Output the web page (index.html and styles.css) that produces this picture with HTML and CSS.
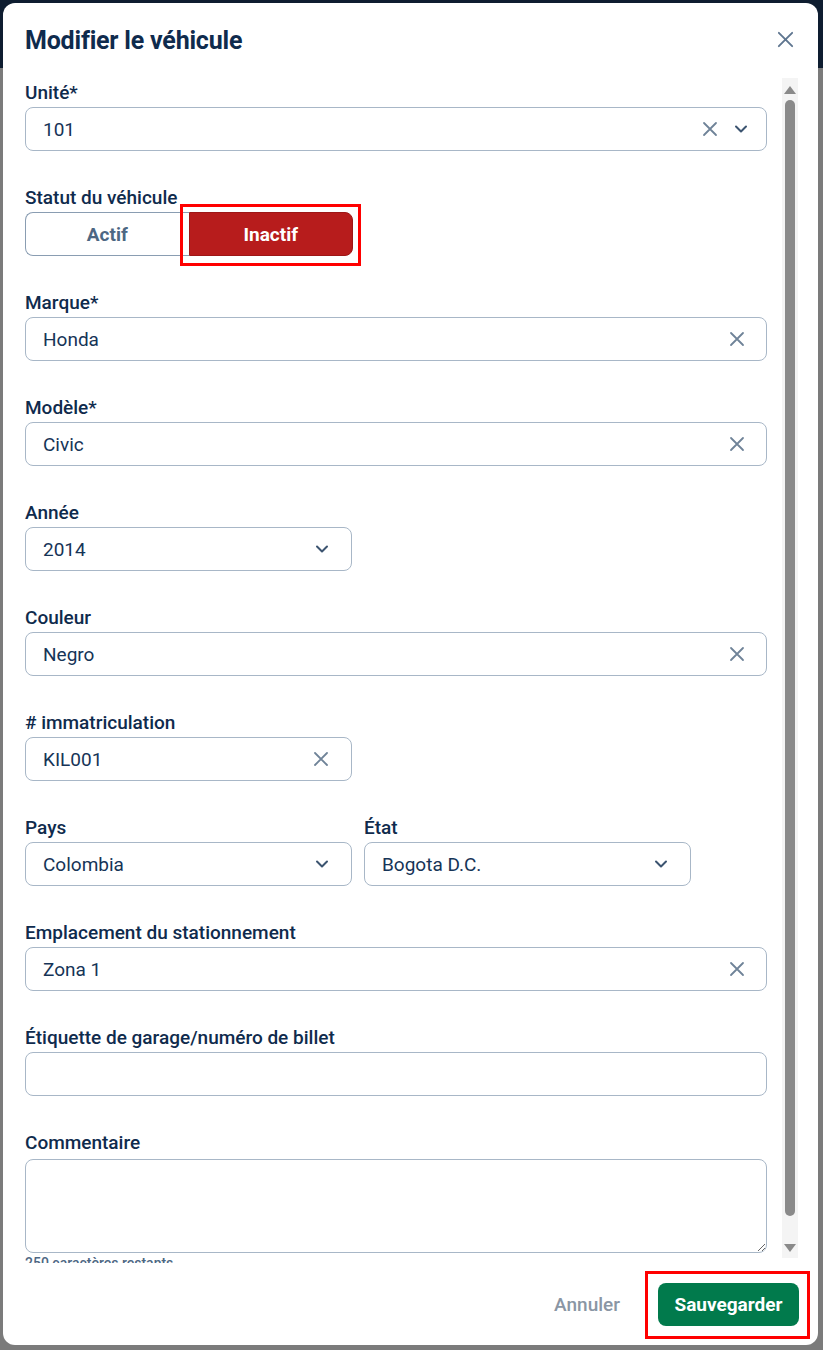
FILE: index.html
```html
<!DOCTYPE html>
<html lang="fr">
<head>
<meta charset="utf-8">
<title>Modifier le véhicule</title>
<link rel="stylesheet" href="styles.css">
</head>
<body>
<div class="backdrop">
  <div class="modal">
    <div class="modal-header">
      <h1 class="title">Modifier le véhicule</h1>
      <svg class="close" viewBox="0 0 20 20" width="20" height="20"><path d="M3 3 L17 17 M17 3 L3 17" stroke="#5f7690" stroke-width="2" fill="none" stroke-linecap="round"/></svg>
    </div>
    <div class="modal-body">
      <div class="form">
        <div class="field">
          <div class="label">Unité*</div>
          <div class="input">
            <span class="value">101</span>
            <span class="icons">
              <svg class="ic-x" viewBox="0 0 16 16"><path d="M2 2 L14 14 M14 2 L2 14"/></svg>
              <svg class="ic-chev" viewBox="0 0 14 10"><path d="M2 2.5 L7 7.5 L12 2.5"/></svg>
            </span>
          </div>
        </div>
        <div class="field">
          <div class="label">Statut du véhicule</div>
          <div class="toggle">
            <div class="seg">Actif</div>
            <div class="seg active">Inactif</div>
            <div class="annot annot-toggle"></div>
          </div>
        </div>
        <div class="field">
          <div class="label">Marque*</div>
          <div class="input clear">
            <span class="value">Honda</span>
            <span class="icons"><svg class="ic-x" viewBox="0 0 16 16"><path d="M2 2 L14 14 M14 2 L2 14"/></svg></span>
          </div>
        </div>
        <div class="field">
          <div class="label">Modèle*</div>
          <div class="input clear">
            <span class="value">Civic</span>
            <span class="icons"><svg class="ic-x" viewBox="0 0 16 16"><path d="M2 2 L14 14 M14 2 L2 14"/></svg></span>
          </div>
        </div>
        <div class="field half">
          <div class="label">Année</div>
          <div class="input">
            <span class="value">2014</span>
            <span class="icons"><svg class="ic-chev" viewBox="0 0 14 10"><path d="M2 2.5 L7 7.5 L12 2.5"/></svg></span>
          </div>
        </div>
        <div class="field">
          <div class="label">Couleur</div>
          <div class="input clear">
            <span class="value">Negro</span>
            <span class="icons"><svg class="ic-x" viewBox="0 0 16 16"><path d="M2 2 L14 14 M14 2 L2 14"/></svg></span>
          </div>
        </div>
        <div class="field half">
          <div class="label"># immatriculation</div>
          <div class="input">
            <span class="value">KIL001</span>
            <span class="icons"><svg class="ic-x" viewBox="0 0 16 16"><path d="M2 2 L14 14 M14 2 L2 14"/></svg></span>
          </div>
        </div>
        <div class="field-row">
          <div class="field half">
            <div class="label">Pays</div>
            <div class="input">
              <span class="value">Colombia</span>
              <span class="icons"><svg class="ic-chev" viewBox="0 0 14 10"><path d="M2 2.5 L7 7.5 L12 2.5"/></svg></span>
            </div>
          </div>
          <div class="field half">
            <div class="label">État</div>
            <div class="input">
              <span class="value">Bogota D.C.</span>
              <span class="icons"><svg class="ic-chev" viewBox="0 0 14 10"><path d="M2 2.5 L7 7.5 L12 2.5"/></svg></span>
            </div>
          </div>
        </div>
        <div class="field">
          <div class="label">Emplacement du stationnement</div>
          <div class="input clear">
            <span class="value">Zona 1</span>
            <span class="icons"><svg class="ic-x" viewBox="0 0 16 16"><path d="M2 2 L14 14 M14 2 L2 14"/></svg></span>
          </div>
        </div>
        <div class="field">
          <div class="label">Étiquette de garage/numéro de billet</div>
          <div class="input"></div>
        </div>
        <div class="field last">
          <div class="label">Commentaire</div>
          <textarea class="textarea"></textarea>
          <div class="helper">250 caractères restants</div>
        </div>
      </div>
      <div class="scrollbar">
        <div class="sb-arrow up"></div>
        <div class="sb-track"><div class="sb-thumb"></div></div>
        <div class="sb-arrow down"></div>
      </div>
    </div>
    <div class="modal-footer">
      <button class="btn-cancel">Annuler</button>
      <div class="save-wrap">
        <button class="btn-save">Sauvegarder</button>
        <div class="annot annot-save"></div>
      </div>
    </div>
  </div>
</div>
</body>
</html>
```

FILE: styles.css
```css
* { box-sizing: border-box; }
html, body { margin: 0; padding: 0; }
body {
  width: 823px;
  height: 1350px;
  overflow: hidden;
  font-family: Roboto, "Noto Sans", "Liberation Sans", sans-serif;
  background: linear-gradient(to bottom, #0e1d30 0, #0e1d30 68px, #7b7b7b 68px, #7b7b7b 100%);
}
.backdrop {
  padding: 3px 5px 5px 3px;
  height: 1350px;
}
.modal {
  width: 815px;
  height: 1342px;
  background: #fff;
  border-radius: 12px;
  display: flex;
  flex-direction: column;
  overflow: hidden;
}
.modal-header {
  height: 65px;
  flex: none;
  display: flex;
  align-items: center;
  justify-content: space-between;
  padding: 0 22px 0 22px;
}
.title {
  margin: 0;
  font-size: 25px;
  font-weight: 700;
  color: #0f2b4d;
  letter-spacing: -0.2px;
  padding-top: 9px;
}
.close { width: 19px; height: 19px; margin-top: 8px; margin-right: 1px; }

.modal-body {
  height: 1195px;
  flex: none;
  display: flex;
  overflow: hidden;
}
.form {
  width: 779px;
  padding: 14px 15px 0 22px;
  overflow: hidden;
}
.field { margin-bottom: 36px; }
.field.half { width: 327px; }
.field-row { display: flex; gap: 12px; }
.label {
  font-size: 19px;
  font-weight: 500;
  color: #0f2b4d;
  line-height: 22px;
  height: 22px;
  margin-bottom: 3px;
}
.input {
  height: 44px;
  border: 1px solid #a8b7c7;
  border-radius: 8px;
  display: flex;
  align-items: center;
  justify-content: space-between;
  padding: 0 18px 0 17px;
  background: #fff;
}
.input.clear { padding-right: 21px; }
.value {
  font-size: 19px;
  color: #163457;
}
.icons { display: flex; align-items: center; gap: 16px; }
.ic-x { width: 16px; height: 16px; }
.ic-x path { stroke: #6f8398; stroke-width: 1.8; fill: none; stroke-linecap: round; }
.ic-chev { width: 14px; height: 10px; }
.ic-chev path { stroke: #3c5470; stroke-width: 2; fill: none; stroke-linecap: round; stroke-linejoin: round; }
.half .input { padding-right: 22px; }

.toggle {
  position: relative;
  display: flex;
  width: 328px;
  height: 44px;
}
.seg {
  flex: 1;
  display: flex;
  align-items: center;
  justify-content: center;
  font-size: 19px;
  font-weight: 700;
  color: #4d6783;
  border: 1px solid #8a9db2;
  border-radius: 8px 0 0 8px;
  border-right: none;
}
.seg.active {
  background: #b71c1c;
  color: #fff;
  border: 1px solid #9e1717;
  border-radius: 0 8px 8px 0;
}
.annot {
  position: absolute;
  border: 3px solid #ff0000;
  pointer-events: none;
}
.annot-toggle { left: 155px; top: -8px; width: 181px; height: 62px; }

.textarea {
  display: block;
  width: 742px;
  height: 94px;
  border: 1px solid #a8b7c7;
  border-radius: 8px;
  margin: 5px 0 0 0;
  resize: vertical;
  font-family: inherit;
  outline: none;
}
.last { margin-bottom: 0; }
.helper {
  margin-top: 2px;
  font-size: 14px;
  color: #4d6783;
  font-weight: 500;
}

.scrollbar {
  width: 16px;
  margin-top: 10px;
  height: 1180px;
  background: #f4f4f4;
  display: flex;
  flex-direction: column;
  align-items: center;
}
.sb-arrow { width: 0; height: 0; margin: 6px 0; }
.sb-arrow.up { border-left: 6px solid transparent; border-right: 6px solid transparent; border-bottom: 8px solid #8a8a8a; margin-top: 8px; }
.sb-arrow.down { border-left: 6px solid transparent; border-right: 6px solid transparent; border-top: 8px solid #8a8a8a; }
.sb-track { flex: 1; width: 100%; display: flex; justify-content: center; padding-bottom: 22px; }
.sb-thumb { width: 10px; height: 100%; background: #8a8a8a; border-radius: 5px; }

.modal-footer {
  flex: 1;
  display: flex;
  align-items: center;
  justify-content: flex-end;
  padding: 0 19px 0 0;
  gap: 24px;
}
.btn-cancel {
  background: none;
  border: none;
  font-family: inherit;
  font-size: 19px;
  font-weight: 500;
  color: #8a96a4;
  padding: 0 14px 0 0;
}
.save-wrap { position: relative; }
.btn-save {
  display: block;
  width: 141px;
  height: 43px;
  background: #017a4c;
  color: #fff;
  border: none;
  border-radius: 8px;
  font-family: inherit;
  font-size: 19px;
  font-weight: 700;
}
.annot-save { left: -13px; top: -12px; width: 165px; height: 68px; }
```
